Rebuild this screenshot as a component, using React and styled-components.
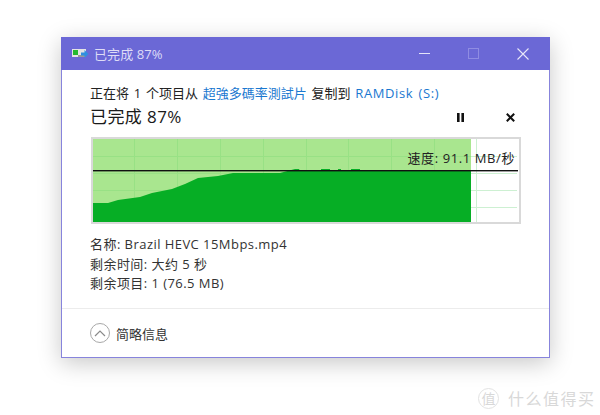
import React from 'react';
import styled, { createGlobalStyle } from 'styled-components';

const GlobalStyle = createGlobalStyle`
  html, body {
    margin: 0;
    padding: 0;
    background: #fff;
  }
  body {
    font-family: "Open Sans", "Noto Sans CJK SC", sans-serif;
    color: #222;
  }
`;

const AREA =
  '0,83 0,64 15,64 25,61 47,58 59,54 79,50 92,45 105,39 125,37 140,34 187,34 202,30 206,30 207,32 228,32 228,30 237,30 237,32 245,32 245,30 248,30 248,32 258,32 258,30 267,30 267,32 378,32 378,83';
const GRID_X = [41, 84, 127, 170, 213, 255, 298, 341, 383];
const GRID_Y = [17, 34, 51, 68];

function SpeedChart() {
  return (
    <svg width="425" height="83" viewBox="0 0 425 83">
      <rect x="0" y="0" width="378" height="83" fill="#a9e68f" />
      {GRID_X.map((x) => (
        <line key={x} x1={x + 0.5} x2={x + 0.5} y1="0" y2="83" stroke={x < 378 ? '#98e185' : '#cdf0d2'} />
      ))}
      {GRID_Y.map((y) => (
        <React.Fragment key={y}>
          <line x1="0" x2="378" y1={y + 0.5} y2={y + 0.5} stroke="#98e185" />
          <line x1="378" x2="424" y1={y + 0.5} y2={y + 0.5} stroke="#cdf0d2" />
        </React.Fragment>
      ))}
      <polygon points={AREA} fill="#06ae25" />
      <rect x="0" y="31" width="425" height="1.4" fill="#111" />
    </svg>
  );
}

function TitleIcon() {
  return (
    <svg width="17" height="12" viewBox="0 0 17 12">
      <rect x="0" y="1" width="14" height="8" fill="#e4e4e4" />
      <rect x="1" y="2" width="5" height="5" fill="#25b92f" />
      <rect x="6" y="7" width="8" height="2" fill="#9a9a9a" />
      <path d="M9 4.5h3.5V2l4 4-4 4V7.5H9z" fill="#2f8fe0" />
    </svg>
  );
}

export default function App() {
  return (
    <Page>
      <GlobalStyle />
      <Window>
        <TitleBar>
          <TitleIcon />
          <TitleText>已完成 87%</TitleText>
          <WindowButtons>
            <WindowButton>
              <svg width="11" height="11" viewBox="0 0 11 11">
                <path d="M0 5.5h11" stroke="#e4e3f8" strokeWidth="1" />
              </svg>
            </WindowButton>
            <WindowButton>
              <svg width="11" height="11" viewBox="0 0 11 11">
                <rect x="0.5" y="0.5" width="10" height="10" fill="none" stroke="#8f8ce2" />
              </svg>
            </WindowButton>
            <WindowButton>
              <svg width="12" height="12" viewBox="0 0 12 12">
                <path d="M.5.5l11 11M11.5.5l-11 11" stroke="#e8e7f9" strokeWidth="1.1" />
              </svg>
            </WindowButton>
          </WindowButtons>
        </TitleBar>

        <Body>
          <Line>
            正在将 1 个项目从 <Link>超強多碼率測試片</Link> 复制到 <Link $spacing="0.6px">RAMDisk (S:)</Link>
          </Line>
          <HeadingRow>
            <Heading>已完成 87%</Heading>
            <Controls>
              <svg width="9" height="9" viewBox="0 0 9 9">
                <path d="M1 0h2.6v9H1zM5.4 0H8v9H5.4z" fill="#111" />
              </svg>
              <svg width="9" height="9" viewBox="0 0 9 9">
                <path d="M.8.8l7.4 7.4M8.2.8L.8 8.2" stroke="#111" strokeWidth="2" />
              </svg>
            </Controls>
          </HeadingRow>
          <Chart>
            <SpeedChart />
            <SpeedLabel>速度: 91.1 MB/秒</SpeedLabel>
          </Chart>
          <Details>
            <DetailLine>名称: Brazil HEVC 15Mbps.mp4</DetailLine>
            <DetailLine>剩余时间: 大约 5 秒</DetailLine>
            <DetailLine>剩余项目: 1 (76.5 MB)</DetailLine>
          </Details>
        </Body>

        <Footer>
          <RoundButton>
            <svg width="12" height="7" viewBox="0 0 12 7">
              <path d="M1 6l5-5 5 5" fill="none" stroke="#8a8a8a" strokeWidth="1.2" />
            </svg>
          </RoundButton>
          <FooterLabel>简略信息</FooterLabel>
        </Footer>
      </Window>
      <Watermark>
        <WatermarkBadge>值</WatermarkBadge>
        什么值得买
      </Watermark>
    </Page>
  );
}

const Page = styled.div`
  position: relative;
  box-sizing: border-box;
  width: 600px;
  height: 415px;
  padding: 37px 50px 0 61px;
  overflow: hidden;
`;

const Window = styled.div`
  box-sizing: border-box;
  width: 489px;
  height: 321px;
  display: flex;
  flex-direction: column;
  background: #fff;
  border: 1px solid #8784dc;
  border-top: 0;
  box-shadow: 0 5px 22px rgba(0, 0, 0, 0.22);
`;

const TitleBar = styled.div`
  height: 33px;
  flex: none;
  margin: 0 -1px;
  padding-left: 11px;
  display: flex;
  align-items: center;
  background: #6b68d6;
`;

const TitleText = styled.span`
  margin-left: 5px;
  font-size: 13px;
  letter-spacing: 0.1px;
  color: #dedcf6;
`;

const WindowButtons = styled.div`
  margin-left: auto;
  display: flex;
  padding-right: 2px;
`;

const WindowButton = styled.div`
  width: 49.5px;
  height: 33px;
  display: flex;
  align-items: center;
  justify-content: center;
`;

const Body = styled.div`
  flex: 1;
  padding: 13px 28px 0 28px;
`;

const Line = styled.div`
  height: 20px;
  font-size: 13px;
  line-height: 20px;
  word-spacing: 1.4px;
  white-space: pre-wrap;
`;

const Link = styled.span`
  color: #1a78d0;
  letter-spacing: ${(p) => p.$spacing || '0'};
`;

const HeadingRow = styled.div`
  box-sizing: border-box;
  height: 26px;
  padding-top: 2px;
  display: flex;
  align-items: center;
  justify-content: space-between;
`;

const Heading = styled.div`
  font-size: 17px;
  line-height: 24px;
  letter-spacing: 0.4px;
  color: #1a1a1a;
`;

const Controls = styled.div`
  display: flex;
  gap: 41px;
  padding-right: 6px;
`;

const Chart = styled.div`
  position: relative;
  box-sizing: border-box;
  width: 430px;
  height: 87px;
  margin: 8px 0 0 1px;
  border: 2px solid #d9d9d9;
  background: #fff;
  line-height: 0;
`;

const SpeedLabel = styled.span`
  position: absolute;
  top: 10px;
  right: 4px;
  font-size: 13px;
  line-height: 18px;
  letter-spacing: 0.6px;
  color: #222;
  white-space: nowrap;
`;

const Details = styled.div`
  margin-top: 11px;
`;

const DetailLine = styled.div`
  height: 19.5px;
  font-size: 13px;
  line-height: 19.5px;
  letter-spacing: 0.45px;
  color: #333;
`;

const Footer = styled.div`
  height: 48px;
  flex: none;
  padding-left: 28px;
  display: flex;
  align-items: center;
  gap: 6px;
  border-top: 1px solid #ececec;
`;

const RoundButton = styled.div`
  box-sizing: border-box;
  width: 20px;
  height: 20px;
  display: flex;
  align-items: center;
  justify-content: center;
  border: 1px solid #a8a8a8;
  border-radius: 50%;
`;

const FooterLabel = styled.span`
  font-size: 13px;
  color: #333;
`;

const Watermark = styled.div`
  position: absolute;
  left: 478px;
  top: 388px;
  display: flex;
  align-items: center;
  gap: 9px;
  font-size: 16px;
  line-height: 20px;
  letter-spacing: 1.5px;
  color: #d8d8d8;
`;

const WatermarkBadge = styled.span`
  box-sizing: border-box;
  width: 21px;
  height: 21px;
  display: flex;
  align-items: center;
  justify-content: center;
  font-size: 14px;
  letter-spacing: 0;
  border: 1px solid #e2e2e2;
  border-radius: 50%;
`;
